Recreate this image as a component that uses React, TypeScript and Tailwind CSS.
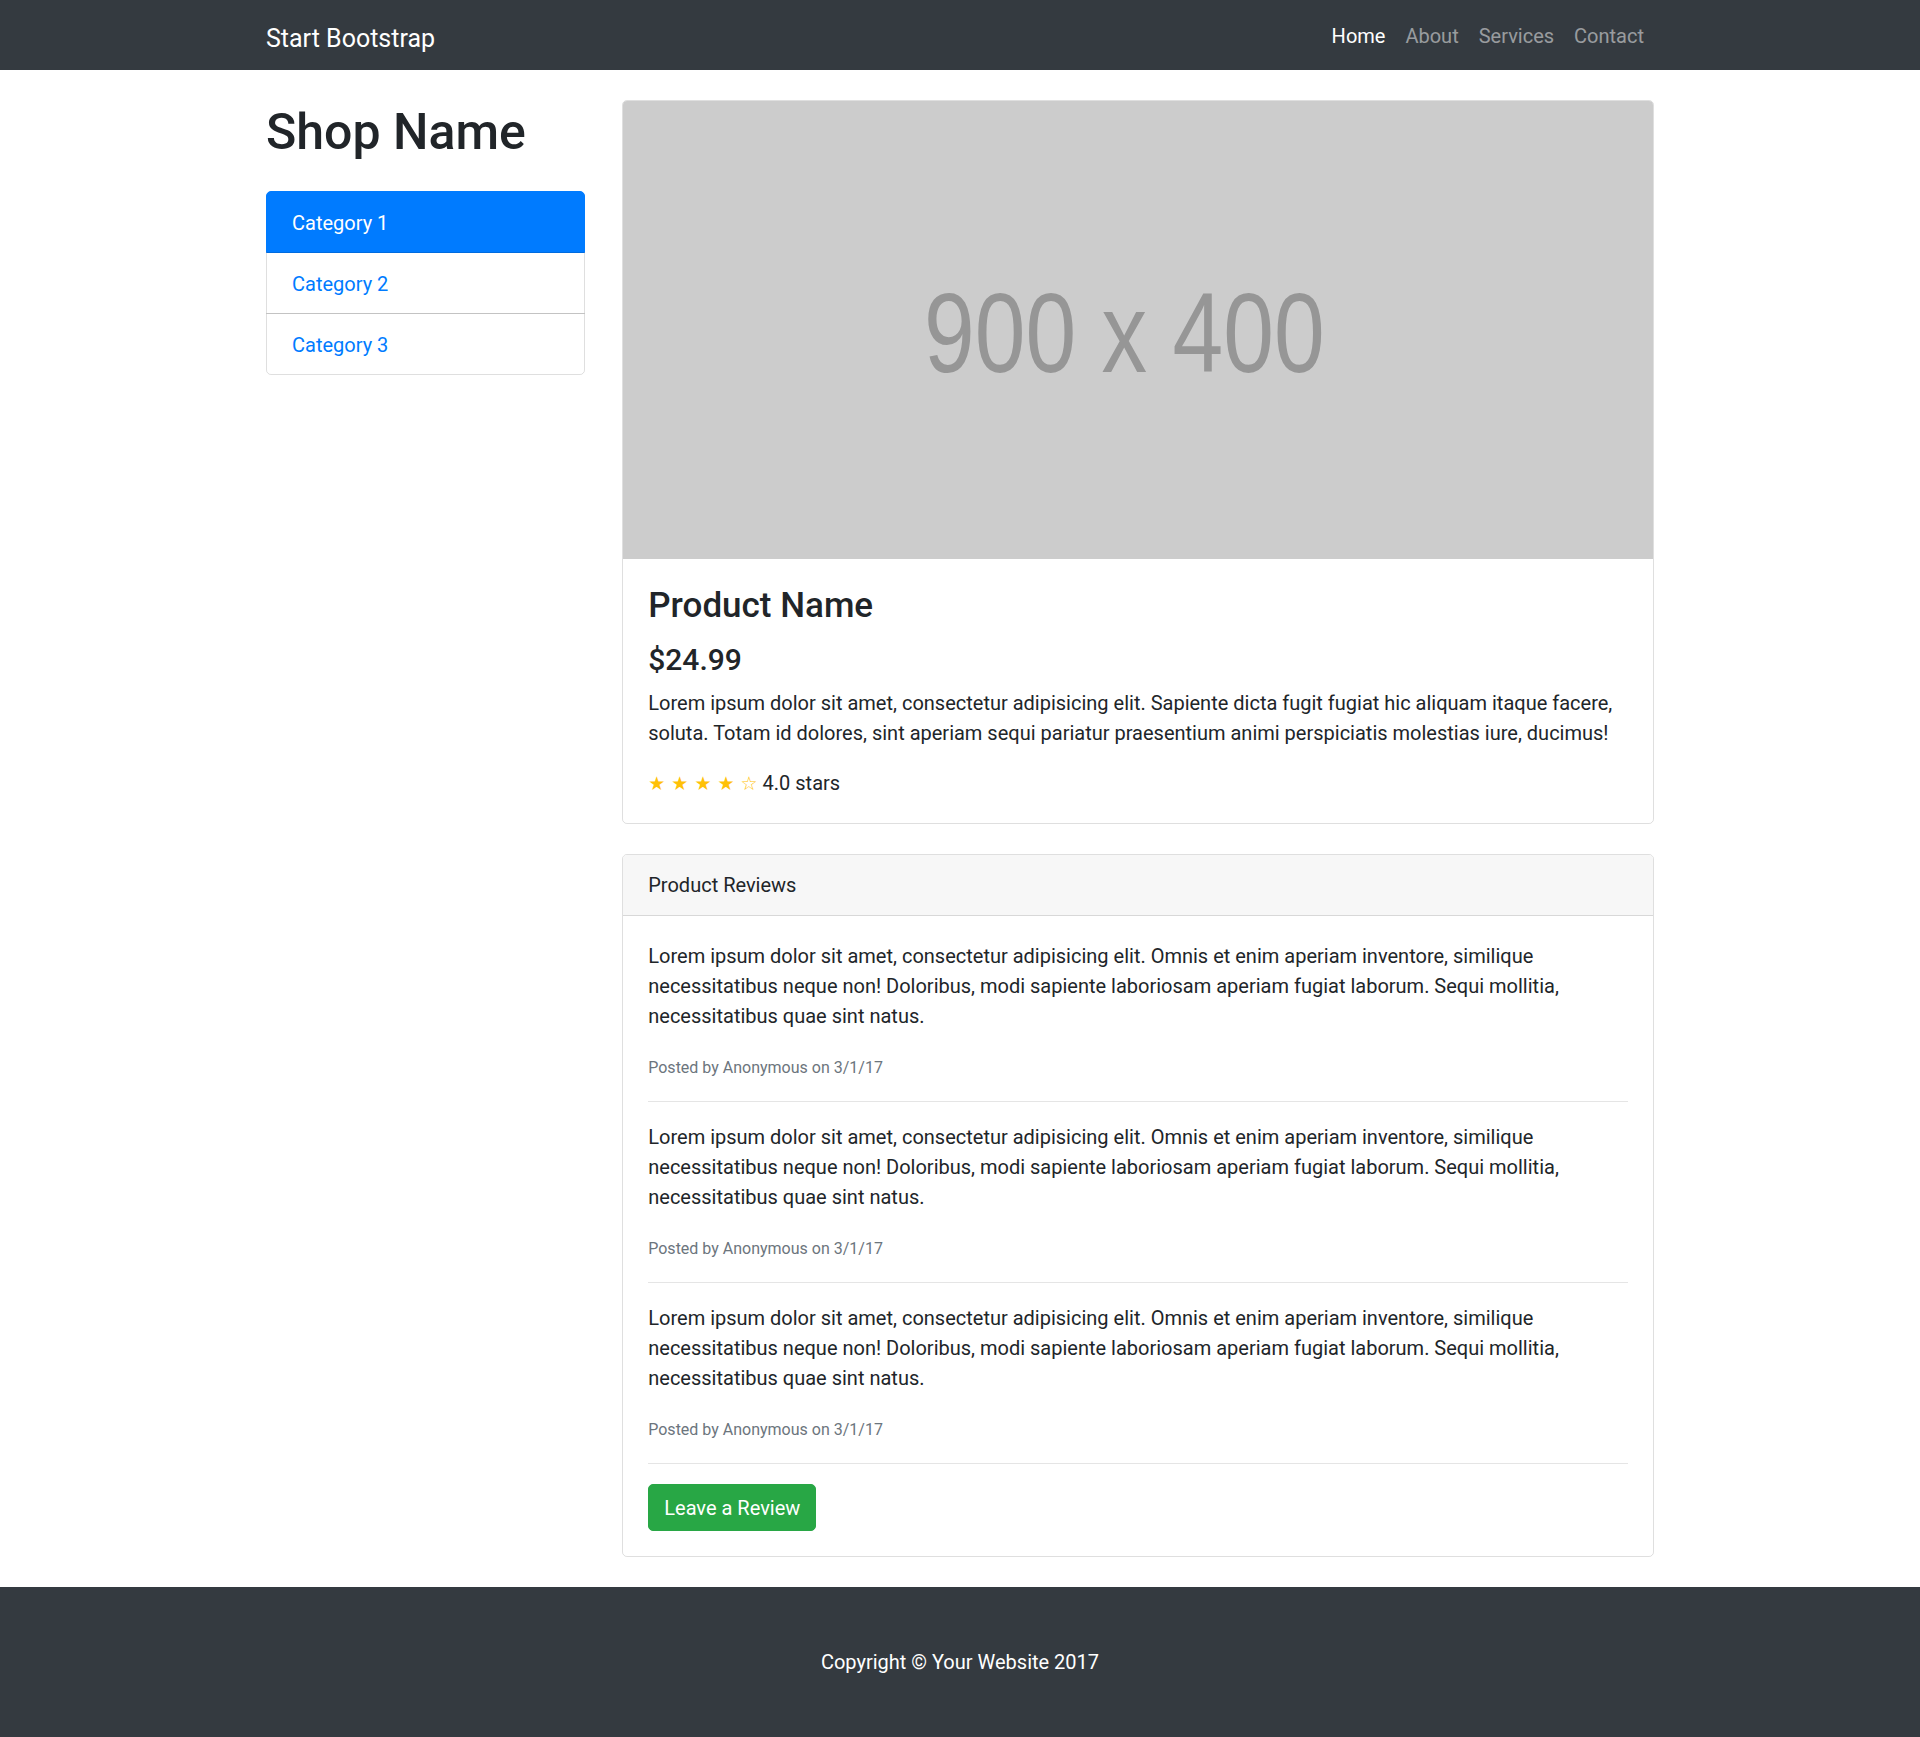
import React from "react";

const reviewText =
  "Lorem ipsum dolor sit amet, consectetur adipisicing elit. Omnis et enim aperiam inventore, similique necessitatibus neque non! Doloribus, modi sapiente laboriosam aperiam fugiat laborum. Sequi mollitia, necessitatibus quae sint natus.";

const navLinks = [
  { label: "Home", active: true },
  { label: "About", active: false },
  { label: "Services", active: false },
  { label: "Contact", active: false },
];

const categories = ["Category 1", "Category 2", "Category 3"];

const Review: React.FC = () => (
  <div>
    <p className="mb-[20px]">{reviewText}</p>
    <small className="text-[16px] text-[#6c757d]">Posted by Anonymous on 3/1/17</small>
    <hr className="my-[20px] border-0 border-t-[1.25px] border-black/10" />
  </div>
);

const App: React.FC = () => {
  return (
    <div className="min-h-screen bg-white text-[20px] leading-[1.5] text-[#212529] font-['Roboto','Liberation_Sans',sans-serif]">
      {/* Navigation */}
      <nav className="h-[70px] bg-[#343a40]">
        <div className="mx-auto flex h-full w-[1388px] items-center justify-between">
          <a href="#" className="mt-[7px] text-[25px] leading-[37.5px] text-white">
            Start Bootstrap
          </a>
          <ul className="mt-[2px] flex">
            {navLinks.map((link) => (
              <li key={link.label}>
                <a
                  href="#"
                  className={
                    link.active
                      ? "block px-[10px] py-[10px] text-white"
                      : "block px-[10px] py-[10px] text-white/50"
                  }
                >
                  {link.label}
                </a>
              </li>
            ))}
          </ul>
        </div>
      </nav>

      {/* Page content */}
      <div className="mx-auto flex w-[1388px] gap-[37.5px]">
        <div className="w-[318.75px] shrink-0">
          <h1 className="mt-[32px] mb-[29px] text-[50px] font-medium leading-[1.2]">Shop Name</h1>
          <div className="flex flex-col">
            {categories.map((cat, i) => (
              <a
                key={cat}
                href="#"
                className={
                  i === 0
                    ? "rounded-t-[5px] border-[1.25px] border-[#007bff] bg-[#007bff] px-[25px] pt-[16px] pb-[14px] text-white"
                    : i === categories.length - 1
                      ? "-mt-[1.25px] rounded-b-[5px] border-[1.25px] border-black/[.125] px-[25px] pt-[16px] pb-[14px] text-[#007bff]"
                      : "-mt-[1.25px] border-[1.25px] border-black/[.125] px-[25px] pt-[16px] pb-[14px] text-[#007bff]"
                }
              >
                {cat}
              </a>
            ))}
          </div>
        </div>

        <div className="min-w-0 flex-1">
          {/* Product card */}
          <div className="mt-[30px] overflow-hidden rounded-[5px] border-[1.25px] border-black/[.125]">
            <div className="flex h-[458px] items-center justify-center bg-[#cccccc]">
              <span className="-ml-[28px] mt-[6px] scale-x-80 text-[114px] leading-none text-[#969696] font-['Liberation_Sans',Arial,sans-serif]">
                900 x 400
              </span>
            </div>
            <div className="p-[25px]">
              <h3 className="mt-[1px] mb-[15px] text-[35px] font-medium leading-[1.2]">Product Name</h3>
              <h4 className="mb-[10px] text-[30px] font-medium leading-[1.2]">$24.99</h4>
              <p className="mb-[20px]">
                Lorem ipsum dolor sit amet, consectetur adipisicing elit. Sapiente dicta fugit fugiat hic aliquam itaque facere, soluta. Totam id dolores, sint aperiam sequi pariatur praesentium animi perspiciatis molestias iure, ducimus!
              </p>
              <div>
                <span className="text-[#ffc107] font-['DejaVu_Sans',sans-serif] text-[19px]">
                  &#9733; &#9733; &#9733; &#9733; &#9734;
                </span>{" "}
                4.0 stars
              </div>
            </div>
          </div>

          {/* Reviews card */}
          <div className="my-[30px] rounded-[5px] border-[1.25px] border-black/[.125]">
            <div className="rounded-t-[4px] border-b-[1.25px] border-black/[.125] bg-[#f7f7f7] px-[25px] py-[15px]">
              Product Reviews
            </div>
            <div className="p-[25px]">
              <Review />
              <Review />
              <Review />
              <a
                href="#"
                className="inline-block rounded-[5px] border-[1.25px] border-[#28a745] bg-[#28a745] px-[15px] py-[7.5px] text-white"
              >
                Leave a Review
              </a>
            </div>
          </div>
        </div>
      </div>

      {/* Footer */}
      <footer className="bg-[#343a40] py-[60px]">
        <p className="m-0 text-center text-white">Copyright &copy; Your Website 2017</p>
      </footer>
    </div>
  );
};

export default App;
